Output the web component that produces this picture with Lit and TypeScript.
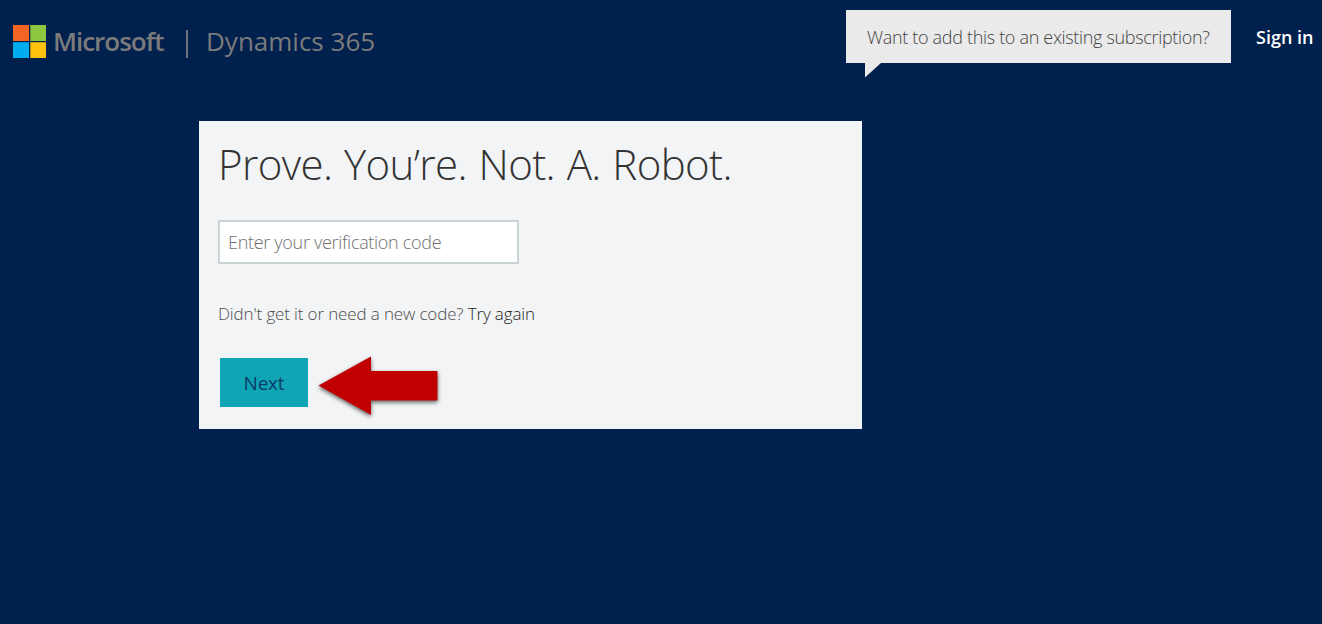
import { LitElement, html, css, svg } from "lit";
import { customElement, state } from "lit/decorators.js";

const logo = svg`
  <svg class="logo" viewBox="0 0 33 33" aria-hidden="true">
    <rect width="16" height="16" fill="#f26522" />
    <rect x="17.3" width="15.7" height="16" fill="#8dc63f" />
    <rect y="17.2" width="16" height="15.8" fill="#00aeef" />
    <rect x="17.3" y="17.2" width="15.7" height="15.8" fill="#ffc20e" />
  </svg>`;

@customElement("app-root")
export class AppRoot extends LitElement {
  @state() private code = "";

  static styles = css`
    :host {
      display: block;
      box-sizing: border-box;
      height: 624px;
      overflow: hidden;
      background: #00204e;
      font-family: "Open Sans", "Noto Sans", sans-serif;
      white-space: nowrap;
    }
    header {
      display: flex;
      align-items: flex-start;
      height: 121px;
      padding-left: 13px;
      box-sizing: border-box;
    }
    .brand {
      display: flex;
      align-items: center;
      height: 33px;
      margin-top: 25px;
      color: #7b7b7b;
      font-size: 26px;
      line-height: 33px;
    }
    .logo {
      display: block;
      width: 33px;
      height: 33px;
    }
    .name {
      width: 131px;
      margin-left: 7px;
      font-weight: 600;
      letter-spacing: -1px;
    }
    .bar {
      width: 2px;
      height: 28px;
      margin: 4px 0 0 2px;
      background: #6f7276;
    }
    .product {
      margin-left: 18px;
    }
    .bubble {
      position: relative;
      box-sizing: border-box;
      width: 385px;
      height: 53px;
      margin: 10px 25px 0 auto;
      padding-left: 21px;
      background: #eaeaea;
      color: #444;
      font-size: 18px;
      font-weight: 300;
      letter-spacing: -0.32px;
      line-height: 54px;
    }
    .tail {
      position: absolute;
      left: 19px;
      top: 52px;
      width: 16px;
      height: 15px;
      fill: #eaeaea;
    }
    .signin {
      width: 66px;
      margin-top: 25px;
      color: #fff;
      font-size: 18px;
      font-weight: 600;
      line-height: 25px;
    }
    main {
      display: flex;
      flex-direction: column;
      align-items: flex-start;
      box-sizing: border-box;
      width: 663px;
      height: 308px;
      margin-left: 199px;
      padding: 15px 19px 0;
      background: #f2f4f6;
    }
    h1 {
      margin: 0;
      color: #333;
      font-size: 42px;
      font-weight: 300;
      letter-spacing: -0.6px;
      word-spacing: 1.3px;
      line-height: 56px;
    }
    input {
      box-sizing: border-box;
      width: 301px;
      height: 44px;
      margin: 28px 0 0;
      padding: 0 8px 1px;
      border: 2px solid #cad3d5;
      border-radius: 0;
      background: #fff;
      color: #333;
      font: 300 18px "Open Sans", "Noto Sans", sans-serif;
      letter-spacing: -0.3px;
      outline: none;
    }
    input::placeholder {
      color: #707070;
      opacity: 1;
    }
    .retry {
      margin: 38px 0 0;
      color: #4c4c4c;
      font-size: 17px;
      font-weight: 300;
      letter-spacing: -0.14px;
      line-height: 24px;
    }
    .retry a {
      color: #1c1c1c;
    }
    .actions {
      display: flex;
      align-items: flex-start;
      margin: 32px 0 0 2px;
    }
    button {
      width: 88px;
      height: 49px;
      padding: 0;
      border: 0;
      background: #10a5b5;
      color: #093c68;
      font: 400 19px "Open Sans", "Noto Sans", sans-serif;
      letter-spacing: -0.2px;
    }
    .arrow {
      width: 130px;
      height: 70px;
      margin: -7px 0 0 5px;
      overflow: visible;
      filter: drop-shadow(0 2.5px 2px rgba(0, 0, 0, 0.6));
    }
  `;

  private onInput(event: Event) {
    this.code = (event.target as HTMLInputElement).value;
  }

  render() {
    return html`
      <header>
        <div class="brand">
          ${logo}
          <span class="name">Microsoft</span>
          <span class="bar"></span>
          <span class="product">Dynamics 365</span>
        </div>
        <div class="bubble">
          <span class="question">Want to add this to an existing subscription?</span>
          <svg class="tail" viewBox="0 0 16 15"><path d="M0 0H16V1L0.5 15H0Z" /></svg>
        </div>
        <a class="signin">Sign in</a>
      </header>
      <main>
        <h1>Prove. You’re. Not. A. Robot.</h1>
        <input placeholder="Enter your verification code" .value=${this.code} @input=${this.onInput} />
        <p class="retry">Didn't get it or need a new code? <a>Try again</a></p>
        <div class="actions">
          <button type="button">Next</button>
          <svg class="arrow" viewBox="0 0 130 70" aria-hidden="true">
            <path d="M5.5 34.5L58 5.5V20H124.5V49.5H58V64Z" fill="#c00000" />
          </svg>
        </div>
      </main>
    `;
  }
}
